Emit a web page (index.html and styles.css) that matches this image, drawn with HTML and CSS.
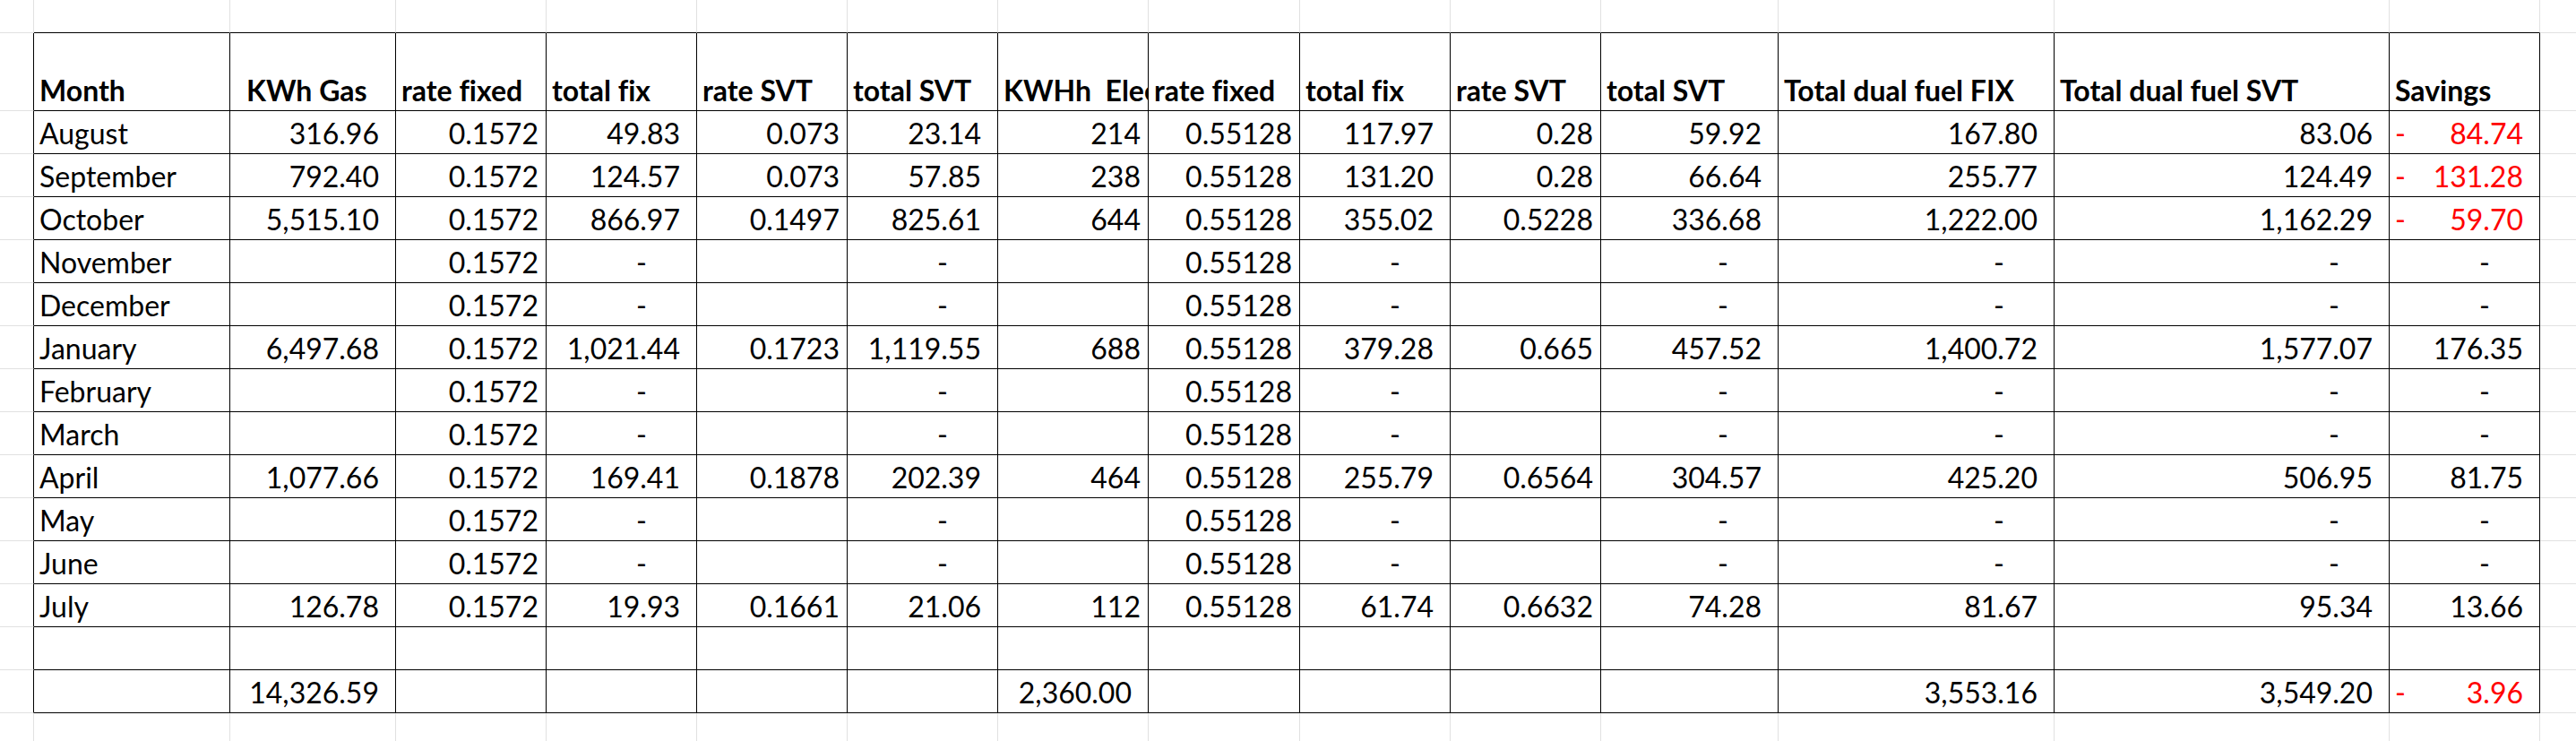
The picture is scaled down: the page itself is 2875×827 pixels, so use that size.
FILE: index.html
```html
<!DOCTYPE html>
<html lang="en">
<head>
<meta charset="utf-8">
<title>Energy comparison</title>
<link rel="stylesheet" href="styles.css">
</head>
<body>
<div class="sheet">
  <!-- row 1 -->
  <div class="c"></div>
  <div class="c tb"></div><div class="c tb"></div><div class="c tb"></div><div class="c tb"></div><div class="c tb"></div><div class="c tb"></div><div class="c tb"></div><div class="c tb"></div><div class="c tb"></div><div class="c tb"></div><div class="c tb"></div><div class="c tb"></div><div class="c tb"></div><div class="c tb"></div>
  <div class="c x"></div>

  <!-- header -->
  <div class="c lb"></div>
  <div class="c t h">Month</div>
  <div class="c t h ha">KWh Gas</div>
  <div class="c t h">rate fixed</div>
  <div class="c t h">total fix</div>
  <div class="c t h">rate SVT</div>
  <div class="c t h">total SVT</div>
  <div class="c t h">KWHh&nbsp; Electric</div>
  <div class="c t h">rate fixed</div>
  <div class="c t h">total fix</div>
  <div class="c t h">rate SVT</div>
  <div class="c t h">total SVT</div>
  <div class="c t h">Total dual fuel FIX</div>
  <div class="c t h">Total dual fuel SVT</div>
  <div class="c t h">Savings</div>
  <div class="c x"></div>

  <!-- August -->
  <div class="c lb"></div>
  <div class="c t">August</div>
  <div class="c t a">316.96</div>
  <div class="c t r">0.1572</div>
  <div class="c t a">49.83</div>
  <div class="c t r">0.073</div>
  <div class="c t a">23.14</div>
  <div class="c t r">214</div>
  <div class="c t r">0.55128</div>
  <div class="c t a">117.97</div>
  <div class="c t r">0.28</div>
  <div class="c t a">59.92</div>
  <div class="c t a">167.80</div>
  <div class="c t a">83.06</div>
  <div class="c t neg"><span>-</span><span>84.74</span></div>
  <div class="c x"></div>

  <!-- September -->
  <div class="c lb"></div>
  <div class="c t">September</div>
  <div class="c t a">792.40</div>
  <div class="c t r">0.1572</div>
  <div class="c t a">124.57</div>
  <div class="c t r">0.073</div>
  <div class="c t a">57.85</div>
  <div class="c t r">238</div>
  <div class="c t r">0.55128</div>
  <div class="c t a">131.20</div>
  <div class="c t r">0.28</div>
  <div class="c t a">66.64</div>
  <div class="c t a">255.77</div>
  <div class="c t a">124.49</div>
  <div class="c t neg"><span>-</span><span>131.28</span></div>
  <div class="c x"></div>

  <!-- October -->
  <div class="c lb"></div>
  <div class="c t">October</div>
  <div class="c t a">5,515.10</div>
  <div class="c t r">0.1572</div>
  <div class="c t a">866.97</div>
  <div class="c t r">0.1497</div>
  <div class="c t a">825.61</div>
  <div class="c t r">644</div>
  <div class="c t r">0.55128</div>
  <div class="c t a">355.02</div>
  <div class="c t r">0.5228</div>
  <div class="c t a">336.68</div>
  <div class="c t a">1,222.00</div>
  <div class="c t a">1,162.29</div>
  <div class="c t neg"><span>-</span><span>59.70</span></div>
  <div class="c x"></div>

  <!-- November -->
  <div class="c lb"></div>
  <div class="c t">November</div>
  <div class="c t"></div>
  <div class="c t r">0.1572</div>
  <div class="c t z">-</div>
  <div class="c t"></div>
  <div class="c t z">-</div>
  <div class="c t"></div>
  <div class="c t r">0.55128</div>
  <div class="c t z">-</div>
  <div class="c t"></div>
  <div class="c t z">-</div>
  <div class="c t z">-</div>
  <div class="c t z">-</div>
  <div class="c t z">-</div>
  <div class="c x"></div>

  <!-- December -->
  <div class="c lb"></div>
  <div class="c t">December</div>
  <div class="c t"></div>
  <div class="c t r">0.1572</div>
  <div class="c t z">-</div>
  <div class="c t"></div>
  <div class="c t z">-</div>
  <div class="c t"></div>
  <div class="c t r">0.55128</div>
  <div class="c t z">-</div>
  <div class="c t"></div>
  <div class="c t z">-</div>
  <div class="c t z">-</div>
  <div class="c t z">-</div>
  <div class="c t z">-</div>
  <div class="c x"></div>

  <!-- January -->
  <div class="c lb"></div>
  <div class="c t">January</div>
  <div class="c t a">6,497.68</div>
  <div class="c t r">0.1572</div>
  <div class="c t a">1,021.44</div>
  <div class="c t r">0.1723</div>
  <div class="c t a">1,119.55</div>
  <div class="c t r">688</div>
  <div class="c t r">0.55128</div>
  <div class="c t a">379.28</div>
  <div class="c t r">0.665</div>
  <div class="c t a">457.52</div>
  <div class="c t a">1,400.72</div>
  <div class="c t a">1,577.07</div>
  <div class="c t a">176.35</div>
  <div class="c x"></div>

  <!-- February -->
  <div class="c lb"></div>
  <div class="c t">February</div>
  <div class="c t"></div>
  <div class="c t r">0.1572</div>
  <div class="c t z">-</div>
  <div class="c t"></div>
  <div class="c t z">-</div>
  <div class="c t"></div>
  <div class="c t r">0.55128</div>
  <div class="c t z">-</div>
  <div class="c t"></div>
  <div class="c t z">-</div>
  <div class="c t z">-</div>
  <div class="c t z">-</div>
  <div class="c t z">-</div>
  <div class="c x"></div>

  <!-- March -->
  <div class="c lb"></div>
  <div class="c t">March</div>
  <div class="c t"></div>
  <div class="c t r">0.1572</div>
  <div class="c t z">-</div>
  <div class="c t"></div>
  <div class="c t z">-</div>
  <div class="c t"></div>
  <div class="c t r">0.55128</div>
  <div class="c t z">-</div>
  <div class="c t"></div>
  <div class="c t z">-</div>
  <div class="c t z">-</div>
  <div class="c t z">-</div>
  <div class="c t z">-</div>
  <div class="c x"></div>

  <!-- April -->
  <div class="c lb"></div>
  <div class="c t">April</div>
  <div class="c t a">1,077.66</div>
  <div class="c t r">0.1572</div>
  <div class="c t a">169.41</div>
  <div class="c t r">0.1878</div>
  <div class="c t a">202.39</div>
  <div class="c t r">464</div>
  <div class="c t r">0.55128</div>
  <div class="c t a">255.79</div>
  <div class="c t r">0.6564</div>
  <div class="c t a">304.57</div>
  <div class="c t a">425.20</div>
  <div class="c t a">506.95</div>
  <div class="c t a">81.75</div>
  <div class="c x"></div>

  <!-- May -->
  <div class="c lb"></div>
  <div class="c t">May</div>
  <div class="c t"></div>
  <div class="c t r">0.1572</div>
  <div class="c t z">-</div>
  <div class="c t"></div>
  <div class="c t z">-</div>
  <div class="c t"></div>
  <div class="c t r">0.55128</div>
  <div class="c t z">-</div>
  <div class="c t"></div>
  <div class="c t z">-</div>
  <div class="c t z">-</div>
  <div class="c t z">-</div>
  <div class="c t z">-</div>
  <div class="c x"></div>

  <!-- June -->
  <div class="c lb"></div>
  <div class="c t">June</div>
  <div class="c t"></div>
  <div class="c t r">0.1572</div>
  <div class="c t z">-</div>
  <div class="c t"></div>
  <div class="c t z">-</div>
  <div class="c t"></div>
  <div class="c t r">0.55128</div>
  <div class="c t z">-</div>
  <div class="c t"></div>
  <div class="c t z">-</div>
  <div class="c t z">-</div>
  <div class="c t z">-</div>
  <div class="c t z">-</div>
  <div class="c x"></div>

  <!-- July -->
  <div class="c lb"></div>
  <div class="c t">July</div>
  <div class="c t a">126.78</div>
  <div class="c t r">0.1572</div>
  <div class="c t a">19.93</div>
  <div class="c t r">0.1661</div>
  <div class="c t a">21.06</div>
  <div class="c t r">112</div>
  <div class="c t r">0.55128</div>
  <div class="c t a">61.74</div>
  <div class="c t r">0.6632</div>
  <div class="c t a">74.28</div>
  <div class="c t a">81.67</div>
  <div class="c t a">95.34</div>
  <div class="c t a">13.66</div>
  <div class="c x"></div>

  <!-- blank -->
  <div class="c lb"></div>
  <div class="c t"></div><div class="c t"></div><div class="c t"></div><div class="c t"></div><div class="c t"></div><div class="c t"></div><div class="c t"></div><div class="c t"></div><div class="c t"></div><div class="c t"></div><div class="c t"></div><div class="c t"></div><div class="c t"></div><div class="c t"></div>
  <div class="c x"></div>

  <!-- totals -->
  <div class="c lb"></div>
  <div class="c t"></div>
  <div class="c t a">14,326.59</div>
  <div class="c t"></div>
  <div class="c t"></div>
  <div class="c t"></div>
  <div class="c t"></div>
  <div class="c t a">2,360.00</div>
  <div class="c t"></div>
  <div class="c t"></div>
  <div class="c t"></div>
  <div class="c t"></div>
  <div class="c t a">3,553.16</div>
  <div class="c t a">3,549.20</div>
  <div class="c t neg"><span>-</span><span>3.96</span></div>
  <div class="c x"></div>

  <!-- row below -->
  <div class="c"></div>
  <div class="c"></div><div class="c"></div><div class="c"></div><div class="c"></div><div class="c"></div><div class="c"></div><div class="c"></div><div class="c"></div><div class="c"></div><div class="c"></div><div class="c"></div><div class="c"></div><div class="c"></div><div class="c"></div>
  <div class="c x"></div>
</div>
</body>
</html>
```

FILE: styles.css
```css
html, body {
  margin: 0;
  padding: 0;
  background: #ffffff;
}

body {
  overflow: hidden;
  font-family: Lato, "Open Sans", "Liberation Sans", sans-serif;
  font-size: 32px;
  font-variant-ligatures: none;
  font-feature-settings: "liga" 0, "clig" 0;
  color: #000000;
}

.sheet {
  display: grid;
  width: 2875px;
  grid-template-columns: 38px 219px 185px 168px 168px 168px 168px 168px 169px 168px 168px 198px 308px 374px 168px 1fr;
  grid-template-rows: 37px 87px repeat(14, 48px) 48px;
}

.c {
  box-sizing: border-box;
  min-width: 0;
  display: flex;
  align-items: flex-end;
  padding: 0 7px 4px 6px;
  line-height: 37px;
  white-space: nowrap;
  overflow: hidden;
  border-right: 1px solid #e1e1e1;
  border-bottom: 1px solid #e1e1e1;
}

.t {
  border-right-color: #000000;
  border-bottom-color: #000000;
}

.tb {
  border-bottom-color: #000000;
}

.lb {
  border-right-color: #000000;
}

.x {
  border-right: 0;
}

.h {
  font-weight: 700;
}

.ha {
  padding-left: 18px;
}

.r {
  justify-content: flex-end;
  padding-right: 8px;
}

.a {
  justify-content: flex-end;
  padding-right: 18px;
}

.z {
  justify-content: flex-end;
  padding-right: 55px;
}

.neg {
  color: #ff0000;
  justify-content: space-between;
  padding-right: 18px;
}
```
